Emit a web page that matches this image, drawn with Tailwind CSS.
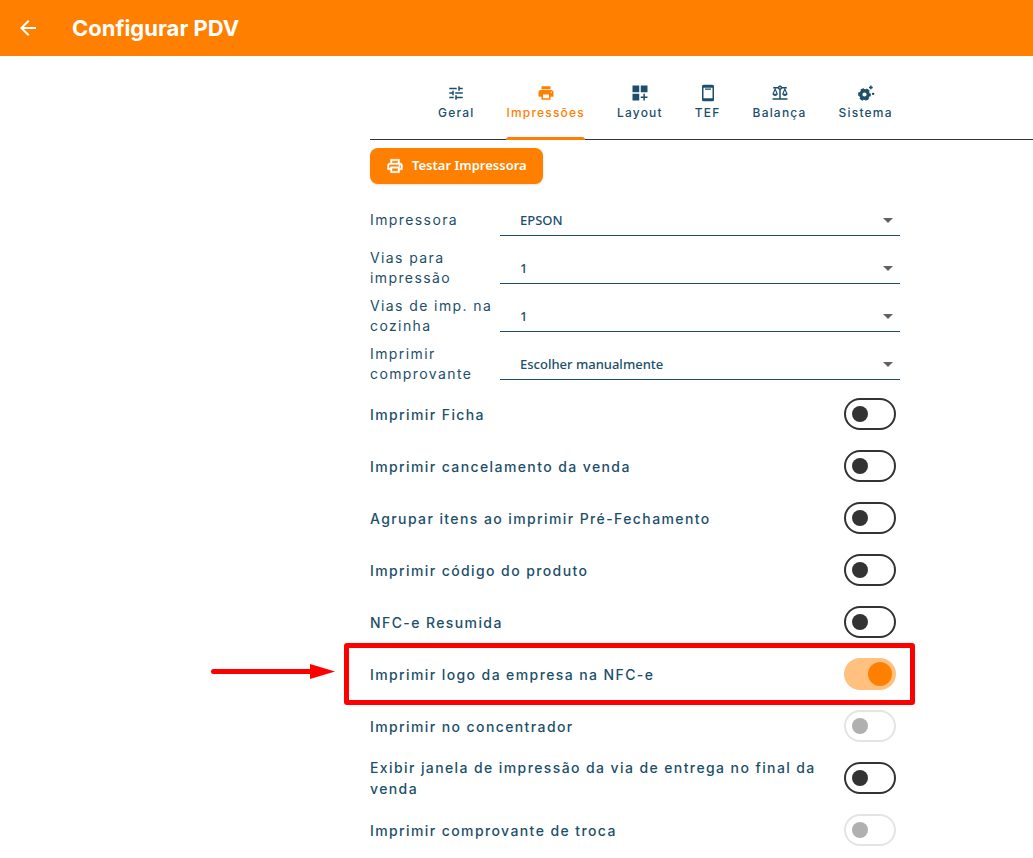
<!DOCTYPE html>
<html lang="pt-BR">
<head>
  <meta charset="UTF-8">
  <meta name="viewport" content="width=device-width, initial-scale=1.0">
  <title>Configurar PDV</title>
  <script src="https://cdn.jsdelivr.net/npm/@tailwindcss/browser@4"></script>
</head>
<body class="bg-white text-[#1c4f6b] font-['Inter',sans-serif] min-h-screen overflow-x-hidden">

  <!-- Header -->
  <header class="bg-[#ff8000] text-white h-14 px-4 flex items-center gap-8">
    <a href="#" aria-label="Voltar">
      <svg class="w-6 h-6" viewBox="0 0 24 24" fill="currentColor"><path d="M20 11H7.83l5.59-5.59L12 4l-8 8 8 8 1.41-1.41L7.83 13H20v-2z"/></svg>
    </a>
    <h1 class="text-[22px] font-bold">Configurar PDV</h1>
  </header>

  <main class="ml-[370px]">

    <!-- Abas -->
    <nav class="flex gap-8 pl-[68px] pt-7 h-[84px] border-b border-[#333] text-xs font-medium tracking-widest">
      <a href="#" class="flex flex-col items-center gap-[3px]">
        <svg class="w-[18px] h-[18px]" viewBox="0 0 24 24" fill="currentColor"><path d="M3 17v2h6v-2H3zM3 5v2h10V5H3zm10 16v-2h8v-2h-8v-2h-2v6h2zM7 9v2H3v2h4v2h2V9H7zm14 4v-2H11v2h10zm-6-4h2V7h4V5h-4V3h-2v6z"/></svg>
        Geral
      </a>
      <a href="#" aria-current="page" class="relative flex flex-col items-center gap-[3px] text-[#ff8000]">
        <svg class="w-[18px] h-[18px]" viewBox="0 0 24 24" fill="currentColor"><path d="M19 8H5c-1.66 0-3 1.34-3 3v6h4v4h12v-4h4v-6c0-1.66-1.34-3-3-3zm-3 11H8v-5h8v5zm3-7c-.55 0-1-.45-1-1s.45-1 1-1 1 .45 1 1-.45 1-1 1zm-1-9H6v4h12V3z"/></svg>
        Impressões
        <span class="absolute inset-x-0 bottom-0 h-[3px] translate-y-px rounded-t-full bg-[#ff8000]"></span>
      </a>
      <a href="#" class="flex flex-col items-center gap-[3px]">
        <svg class="w-[18px] h-[18px]" viewBox="0 0 24 24" fill="currentColor"><path d="M2 2h9v9H2zM13 2h9v9h-9zM2 13h9v9H2zM16.500 13h2v3.500H22v2h-3.500V22h-2v-3.500H13v-2h3.500z"/></svg>
        Layout
      </a>
      <a href="#" class="flex flex-col items-center gap-[3px]">
        <svg class="w-[18px] h-[18px]" viewBox="0 0 24 24" fill="currentColor"><path fill-rule="evenodd" d="M6 1h12a2 2 0 0 1 2 2v18a2 2 0 0 1-2 2H6a2 2 0 0 1-2-2V3a2 2 0 0 1 2-2zm0 4v14h12V5H6zm2 1h8v1.500H8z"/></svg>
        TEF
      </a>
      <a href="#" class="flex flex-col items-center gap-[3px]">
        <svg class="w-[18px] h-[18px]" viewBox="0 0 24 24" fill="currentColor"><path fill-rule="evenodd" d="M13 7.830c.85-.3 1.530-.98 1.830-1.830H18l-3 7c0 1.660 1.570 3 3.500 3s3.500-1.340 3.500-3l-3-7h2V4h-6.170C14.420 2.830 13.310 2 12 2s-2.420.83-2.830 2H3v2h2l-3 7c0 1.660 1.570 3 3.500 3S9 14.660 9 13L6 6h3.170c.3.850.98 1.530 1.830 1.830V19H2v2h20v-2h-9V7.830zM20.370 13h-3.740l1.870-4.360L20.370 13zm-13 0H3.630L5.500 8.640 7.370 13zM12 6c-.55 0-1-.45-1-1s.45-1 1-1 1 .45 1 1-.45 1-1 1z"/></svg>
        Balança
      </a>
      <a href="#" class="flex flex-col items-center gap-[3px]">
        <svg class="w-[18px] h-[18px]" viewBox="0 0 24 24" fill="none" stroke="currentColor"><circle cx="10" cy="14" r="5" stroke-width="4.400"/><circle cx="10" cy="14" r="7.300" stroke-width="2.400" stroke-dasharray="4.600 3.045" stroke-dashoffset="2.300"/><path d="M18.500 2v5M16 4.500h5" stroke-width="2"/><path d="M21.500 11.500v3M20 13h3" stroke-width="1.800"/></svg>
        Sistema
      </a>
    </nav>

    <div class="max-w-[530px] pt-2">
      <button type="button" class="flex items-center gap-2 h-9 px-4 rounded-lg bg-[#ff8000] text-white text-[13px] font-semibold font-['Noto_Sans',sans-serif] shadow-sm">
        <svg class="w-[18px] h-[18px]" viewBox="0 0 24 24" fill="currentColor" stroke="currentColor" stroke-width="0.600"><path d="M19 8h-1V3H6v5H5c-1.660 0-3 1.340-3 3v6h4v4h12v-4h4v-6c0-1.660-1.340-3-3-3zM8 5h8v3H8V5zm8 12v2H8v-4h8v2zm2-2v-2H6v2H4v-4c0-.55.45-1 1-1h14c.55 0 1 .45 1 1v4h-2z"/><circle cx="18" cy="11.500" r="1"/></svg>
        Testar Impressora
      </button>

      <!-- Campos -->
      <div class="pt-3">
        <div class="flex items-center h-12">
          <label for="impressora" class="w-[130px] shrink-0 text-sm leading-5 tracking-widest">Impressora</label>
          <div class="relative flex-1">
            <select id="impressora" class="appearance-none w-full h-8 pt-0.5 pl-5 pr-8 border-b border-[#1c4f6b] text-[13px] font-medium font-['Noto_Sans',sans-serif]">
              <option>EPSON</option>
            </select>
            <svg class="absolute right-0 top-1 w-6 h-6 text-[#616161] pointer-events-none" viewBox="0 0 24 24" fill="currentColor"><path d="M7 10l5 5 5-5z"/></svg>
          </div>
        </div>
        <div class="flex items-center h-12">
          <label for="vias" class="w-[130px] shrink-0 text-sm leading-5 tracking-widest">Vias para<br>impressão</label>
          <div class="relative flex-1">
            <select id="vias" class="appearance-none w-full h-8 pt-0.5 pl-5 pr-8 border-b border-[#1c4f6b] text-[13px] font-medium font-['Noto_Sans',sans-serif]">
              <option>1</option>
              <option>2</option>
            </select>
            <svg class="absolute right-0 top-1 w-6 h-6 text-[#616161] pointer-events-none" viewBox="0 0 24 24" fill="currentColor"><path d="M7 10l5 5 5-5z"/></svg>
          </div>
        </div>
        <div class="flex items-center h-12">
          <label for="cozinha" class="w-[130px] shrink-0 text-sm leading-5 tracking-widest">Vias de imp. na<br>cozinha</label>
          <div class="relative flex-1">
            <select id="cozinha" class="appearance-none w-full h-8 pt-0.5 pl-5 pr-8 border-b border-[#1c4f6b] text-[13px] font-medium font-['Noto_Sans',sans-serif]">
              <option>1</option>
              <option>2</option>
            </select>
            <svg class="absolute right-0 top-1 w-6 h-6 text-[#616161] pointer-events-none" viewBox="0 0 24 24" fill="currentColor"><path d="M7 10l5 5 5-5z"/></svg>
          </div>
        </div>
        <div class="flex items-center h-12">
          <label for="comprovante" class="w-[130px] shrink-0 text-sm leading-5 tracking-widest">Imprimir<br>comprovante</label>
          <div class="relative flex-1">
            <select id="comprovante" class="appearance-none w-full h-8 pt-0.5 pl-5 pr-8 border-b border-[#1c4f6b] text-[13px] font-medium font-['Noto_Sans',sans-serif]">
              <option>Escolher manualmente</option>
            </select>
            <svg class="absolute right-0 top-1 w-6 h-6 text-[#616161] pointer-events-none" viewBox="0 0 24 24" fill="currentColor"><path d="M7 10l5 5 5-5z"/></svg>
          </div>
        </div>
      </div>

      <!-- Opções: preenchidas pelo script -->
      <div id="opcoes" class="text-sm font-medium leading-[21px] tracking-widest"></div>
    </div>
  </main>

  <script>
    const opcoes = [
      { id: 'ficha', label: 'Imprimir Ficha' },
      { id: 'cancelamento', label: 'Imprimir cancelamento da venda' },
      { id: 'agrupar', label: 'Agrupar itens ao imprimir Pré-Fechamento' },
      { id: 'codigo', label: 'Imprimir código do produto' },
      { id: 'resumida', label: 'NFC-e Resumida' },
      { id: 'logo', label: 'Imprimir logo da empresa na NFC-e', checked: true, destaque: true },
      { id: 'concentrador', label: 'Imprimir no concentrador', disabled: true },
      { id: 'janela', label: 'Exibir janela de impressão da via de entrega no final da venda' },
      { id: 'troca', label: 'Imprimir comprovante de troca', disabled: true }
    ];

    // Moldura e seta vermelhas em volta da opção em destaque
    const destaque = `
      <span class="absolute -left-[26px] -right-[15px] -top-[5px] -bottom-[5px] border-[5px] border-[#ff0000] rounded-[3px] pointer-events-none"></span>
      <svg class="absolute -left-[159px] top-4 w-[124px] h-4" viewBox="0 0 124 16">
        <path d="M2.500 7.500H100" stroke="#ff0000" stroke-width="5" stroke-linecap="round"/>
        <path d="M99 0L124 7.500L99 15z" fill="#ff0000"/>
      </svg>
    `;

    document.getElementById('opcoes').innerHTML = opcoes.map(op => `
      <div class="relative flex items-center justify-between h-[52px] pr-1">
        <label for="${op.id}" class="max-w-[460px]">${op.label}</label>
        <input type="checkbox" role="switch" id="${op.id}" ${op.checked ? 'checked' : ''} ${op.disabled ? 'disabled' : ''}
          class="appearance-none shrink-0 flex items-center w-[52px] h-8 px-1.5 rounded-full border-2 border-[#333] before:w-4 before:h-4 before:rounded-full before:bg-[#333] checked:justify-end checked:px-0.5 checked:border-[#ffc080] checked:bg-[#ffc080] checked:before:w-6 checked:before:h-6 checked:before:bg-[#ff8000] disabled:border-[#e4e4e4] disabled:before:bg-[#b0b0b0]">
        ${op.destaque ? destaque : ''}
      </div>
    `).join('');
  </script>

</body>
</html>
